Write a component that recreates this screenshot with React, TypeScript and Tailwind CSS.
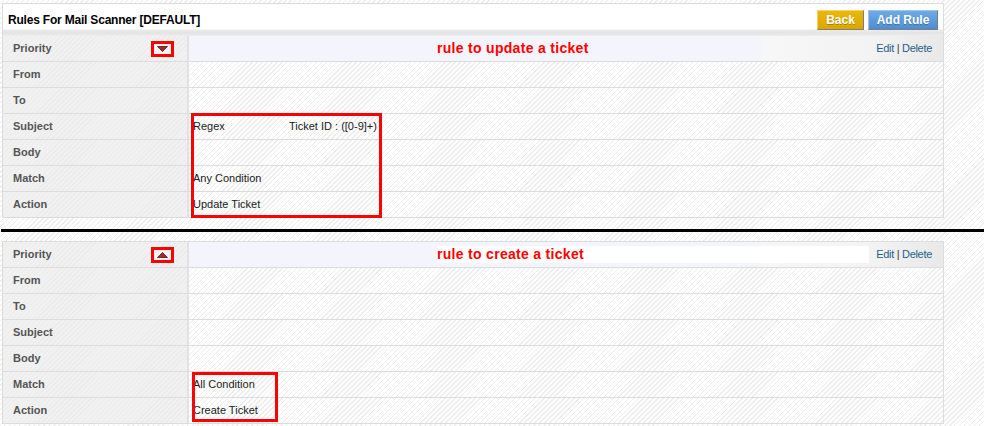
import React from "react";

const HATCH =
  "bg-[repeating-linear-gradient(135deg,#ffffff_0px,#ffffff_2.5px,#ededed_2.5px,#ededed_3.5px)]";
const LABEL_BG =
  "bg-[repeating-linear-gradient(135deg,#f1f1f1_0px,#f1f1f1_2.5px,#ebebeb_2.5px,#ebebeb_3.5px)]";

function Arrow({ up }: { up?: boolean }) {
  return (
    <div className="w-[23px] h-[16px] border-[3px] border-[#ff0000] bg-[#f3f3f3] flex items-center justify-center">
      <svg width="11" height="6" viewBox="0 0 11 6">
        {up ? (
          <polygon points="0.5,5.5 10.5,5.5 5.5,0.5" fill="#a8282a" stroke="#5a1010" strokeWidth="0.8" />
        ) : (
          <polygon points="0.5,0.5 10.5,0.5 5.5,5.5" fill="#a8282a" stroke="#5a1010" strokeWidth="0.8" />
        )}
      </svg>
    </div>
  );
}

function LabelCell({ children, arrow }: { children: React.ReactNode; arrow?: React.ReactNode }) {
  return (
    <div
      className={`w-[186px] shrink-0 h-full flex items-center justify-between pl-[10px] pr-[13px] border-r-2 border-[#e2e2e2] ${LABEL_BG}`}
    >
      <span className="text-[11px] font-bold text-[#555555] leading-none">{children}</span>
      {arrow}
    </div>
  );
}

function Row({ label, value }: { label: string; value?: React.ReactNode }) {
  return (
    <div className="h-[26px] flex border-b border-[#dcdcdc]">
      <LabelCell>{label}</LabelCell>
      <div className={`flex-1 h-full flex items-center pl-[4px] text-[11px] text-[#1a1a1a] ${HATCH}`}>{value}</div>
    </div>
  );
}

function PriorityRow({ up, text, highlight }: { up?: boolean; text: string; highlight?: boolean }) {
  return (
    <div className="h-[26px] flex border-b border-[#dcdcdc]">
      <LabelCell arrow={<Arrow up={up} />}>Priority</LabelCell>
      <div className="flex-1 h-full flex items-center bg-[linear-gradient(to_right,#f4f4fd_0px,#f4f4fd_572px,#f7f7f7_572px,#f3f3f3_680px,#e9e9e9_100%)]">
        <span
          className={`ml-[248px] h-[17px] flex items-center text-[14px] font-bold text-[#ff0000] tracking-[0.3px] ${
            highlight ? "bg-white w-[432px]" : ""
          }`}
        >
          {text}
        </span>
        <span className="ml-auto pr-[11px] text-[11px] tracking-[-0.3px] text-[#1f5f8c]">
          Edit <span className="text-[#333333]">|</span> Delete
        </span>
      </div>
    </div>
  );
}

export default function App() {
  return (
    <div className={`w-[984px] h-[426px] overflow-hidden pt-[3px] font-['Liberation_Sans',Arial,sans-serif] ${HATCH}`}>
      {/* Table 1 */}
      <div className="ml-[2px] w-[942px] border-x border-t border-[#dcdcdc]">
        <div className="h-[32px] flex items-center justify-between pl-[5px] pr-[5px] bg-[linear-gradient(to_bottom,#ffffff_0px,#ffffff_25px,#ececec_26px,#e3e3e3_29px,#eeeeee_32px)]">
          <span className="text-[12px] font-bold text-black tracking-[-0.2px]">Rules For Mail Scanner [DEFAULT]</span>
          <div className="flex gap-[4px] mt-[-1px]">
            <button className="w-[47px] h-[20px] text-[12px] font-bold text-white bg-[linear-gradient(to_bottom,#ecb70a,#dca600)] border border-t-[#f5d460] border-l-[#f5d460] border-r-[#7d7d7d] border-b-[#7d7d7d] [text-shadow:0_1px_0_rgba(0,0,0,0.25)]">
              Back
            </button>
            <button className="w-[70px] h-[20px] text-[12px] font-bold text-white bg-[linear-gradient(to_bottom,#6eaae4,#4d8dd2)] border border-t-[#9cc6ef] border-l-[#9cc6ef] border-r-[#7d7d7d] border-b-[#7d7d7d] [text-shadow:0_1px_0_rgba(0,0,0,0.25)]">
              Add Rule
            </button>
          </div>
        </div>
        <div className="relative">
          <PriorityRow text="rule to update a ticket" />
          <Row label="From" />
          <Row label="To" />
          <Row
            label="Subject"
            value={
              <>
                <span className="w-[96px]">Regex</span>
                <span>Ticket ID : ([0-9]+)</span>
              </>
            }
          />
          <Row label="Body" />
          <Row label="Match" value="Any Condition" />
          <Row label="Action" value="Update Ticket" />
          <div className="absolute left-[188px] top-[77px] w-[191px] h-[105px] border-[3px] border-[#ff0000] pointer-events-none" />
        </div>
      </div>

      {/* Separator */}
      <div className="mt-[11px] mb-[9px] ml-[1px] h-[3px] bg-black" />

      {/* Table 2 */}
      <div className="ml-[2px] w-[942px] border-x border-t border-[#dcdcdc]">
        <div className="relative">
          <PriorityRow up text="rule to create a ticket" highlight />
          <Row label="From" />
          <Row label="To" />
          <Row label="Subject" />
          <Row label="Body" />
          <Row label="Match" value="All Condition" />
          <Row label="Action" value="Create Ticket" />
          <div className="absolute left-[189px] top-[130px] w-[86px] h-[50px] border-[3px] border-[#ff0000] pointer-events-none" />
        </div>
      </div>
    </div>
  );
}
